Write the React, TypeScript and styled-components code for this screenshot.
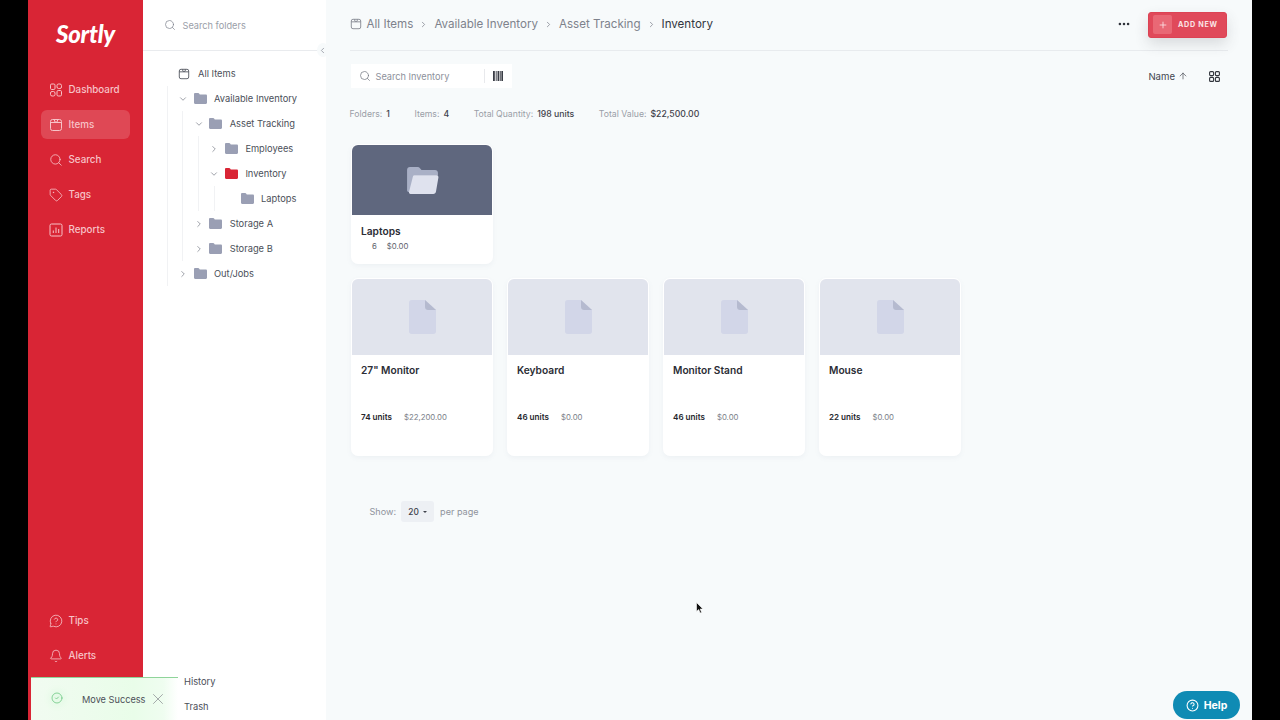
import { ReactNode } from "react";
import styled, { createGlobalStyle } from "styled-components";
import {
    ArrowUp,
    Bell,
    ChevronDown,
    ChevronLeft,
    ChevronRight,
    CircleCheck,
    CircleHelp,
    MessageCircleQuestion,
    MoreHorizontal,
    Plus,
    Search,
    Tag,
    X
} from "lucide-react";

const GlobalStyle = createGlobalStyle`
    html, body {
        margin: 0;
        padding: 0;
        background: #000;
        font-family: "Inter", "Noto Sans", sans-serif;
    }
    * {
        box-sizing: border-box;
    }
`;

const Frame = styled.div`
    position: relative;
    width: 1280px;
    height: 720px;
    padding: 0 28px;
    display: flex;
    overflow: hidden;
    background: #000;
`;

/* left red nav */
const Sidebar = styled.nav`
    width: 114.5px;
    flex-shrink: 0;
    background: #d92535;
    display: flex;
    flex-direction: column;
    padding: 0 12.5px 0 13px;
`;

const Logo = styled.div`
    height: 75px;
    padding-top: 17px;
    text-align: center;
    color: #fff;
    font-family: "Lato", sans-serif;
    font-style: italic;
    font-weight: 900;
    font-size: 24px;
    line-height: 34px;
    letter-spacing: -0.2px;
`;

const NavList = styled.div`
    display: flex;
    flex-direction: column;
    gap: 6px;
`;

const NavBottom = styled(NavList)`
    margin-top: auto;
    padding-bottom: 50px;
`;

const NavItem = styled.div<{ $active?: boolean }>`
    height: 29px;
    display: flex;
    align-items: center;
    gap: 6px;
    padding-left: 7.5px;
    border-radius: 6px;
    font-size: 9.8px;
    font-weight: 500;
    color: #f7c3c8;
    background: ${(p) => (p.$active ? "rgba(255,255,255,0.16)" : "transparent")};

    svg {
        width: 14px;
        height: 14px;
        flex-shrink: 0;
    }
`;

/* folder tree panel */
const FolderPanel = styled.aside`
    position: relative;
    width: 183px;
    flex-shrink: 0;
    background: #fff;
    display: flex;
    flex-direction: column;
`;

const FolderSearch = styled.div`
    height: 51px;
    flex-shrink: 0;
    display: flex;
    align-items: center;
    gap: 7px;
    padding-left: 21px;
    border-bottom: 1px solid #e9ebee;
    margin-right: 8px;
    font-size: 9.2px;
    color: #9a9ea8;

    svg {
        width: 12px;
        height: 12px;
        color: #7d818c;
    }
`;

const CollapseTab = styled.div`
    position: absolute;
    right: -3px;
    top: 43px;
    width: 12px;
    height: 14px;
    display: flex;
    align-items: center;
    justify-content: center;
    background: #f7fafb;
    border-radius: 50%;
    color: #8b8f99;

    svg {
        width: 9px;
        height: 9px;
    }
`;

const Tree = styled.div`
    padding: 10px 0 0 25px;
    flex: 1;
`;

const TreeGroup = styled.div`
    margin-left: 14.7px;
    border-left: 1px solid #f1f2f4;
`;

const TreeRoot = styled(TreeGroup)`
    margin-left: -1px;
`;

const Row = styled.div`
    height: 25px;
    display: flex;
    align-items: center;
    font-size: 9.3px;
    color: #4b4f59;
    white-space: nowrap;
`;

const AllItemsRow = styled(Row)`
    padding-left: 10px;
    gap: 8.5px;

    svg {
        width: 12px;
        height: 12px;
    }
`;

const Caret = styled.span`
    width: 16px;
    flex-shrink: 0;
    margin-left: 7.5px;
    display: flex;
    justify-content: center;
    color: #8b8f99;

    svg {
        width: 10px;
        height: 10px;
    }
`;

const FolderMark = styled.svg`
    width: 13px;
    height: 11px;
    flex-shrink: 0;
    margin: 0 7.5px 0 2.5px;
`;

const PanelFoot = styled.div`
    padding: 0 0 1px 41.5px;
`;

/* main area */
const Main = styled.main`
    flex: 1;
    min-width: 0;
    background: #f7fafb;
    padding: 0 24px;
    display: flex;
    flex-direction: column;
`;

const TopBar = styled.header`
    height: 51px;
    flex-shrink: 0;
    display: flex;
    align-items: center;
    justify-content: space-between;
    border-bottom: 1px solid #e8ebee;
    padding-bottom: 2px;
`;

const Crumbs = styled.div`
    display: flex;
    align-items: center;
    gap: 6px;
    font-size: 11.6px;
    color: #7e828c;

    > svg:first-child {
        width: 12px;
        height: 12px;
        margin-right: -1px;
    }
`;

const CrumbSep = styled(ChevronRight)`
    width: 9px;
    height: 9px;
    color: #7e828c;
`;

const CrumbNow = styled.span`
    color: #33363f;
`;

const TopActions = styled.div`
    display: flex;
    align-items: center;
    gap: 17px;
    margin-right: 1px;
    color: #30333b;
`;

const AddNew = styled.button`
    width: 79px;
    height: 26px;
    margin-top: 1px;
    border: 1px solid #dc4354;
    border-radius: 3px;
    background: #e0495a;
    box-shadow: 0 6px 14px rgba(60, 60, 70, 0.16);
    color: #fbe4e6;
    font: 700 7.2px "Inter", sans-serif;
    letter-spacing: 0.7px;
    display: flex;
    align-items: center;
    gap: 6px;
    padding: 0 0 0 4px;
`;

const PlusBox = styled.span`
    width: 19px;
    height: 19px;
    border-radius: 2px;
    background: #e96875;
    display: flex;
    align-items: center;
    justify-content: center;

    svg {
        width: 10px;
        height: 10px;
    }
`;

const ToolRow = styled.div`
    margin-top: 13px;
    display: flex;
    align-items: center;
    justify-content: space-between;
    padding-left: 1px;
    padding-right: 8px;
`;

const SearchBox = styled.div`
    width: 161px;
    height: 24px;
    background: #fff;
    display: flex;
    align-items: center;
    padding: 0 9px 0 8px;
    font-size: 9.2px;
    color: #8d919b;

    > svg:first-child {
        width: 12px;
        height: 12px;
        color: #6f737d;
        margin-right: 5px;
    }
`;

const SearchLabel = styled.span`
    flex: 1;
`;

const ScanDivider = styled.span`
    width: 1px;
    height: 14px;
    background: #e8e9ec;
    margin-right: 8px;
`;

const SortGroup = styled.div`
    display: flex;
    align-items: center;
    font-size: 9.6px;
    color: #43464f;
`;

const SortArrow = styled(ArrowUp)`
    width: 10px;
    height: 10px;
    margin-left: 3px;
`;

const GridToggle = styled.svg`
    width: 11px;
    height: 11px;
    margin-left: 21px;
`;

const Stats = styled.div`
    margin-top: 19px;
    height: 14px;
    display: flex;
    gap: 24.5px;
    align-items: center;
    font-size: 8.7px;
    color: #9a9ea7;
    white-space: nowrap;
`;

const StatValue = styled.b`
    font-weight: 500;
    color: #3f424b;
    margin-left: 4px;
`;

const CardRow = styled.div`
    display: flex;
    gap: 14px;
    padding-left: 1.5px;
`;

const FolderCards = styled(CardRow)`
    margin-top: 23px;
`;

const ItemCards = styled(CardRow)`
    margin-top: 14px;
`;

const Card = styled.article<{ $tall?: boolean }>`
    width: 142px;
    height: ${(p) => (p.$tall ? "178px" : "120px")};
    background: #fff;
    border-radius: 7px;
    box-shadow: 0 2px 5px rgba(120, 130, 150, 0.07);
    padding: 1px 1px 0 1px;
`;

const Thumb = styled.div<{ $dark?: boolean }>`
    height: ${(p) => (p.$dark ? "70px" : "76px")};
    border-radius: 6px 6px 0 0;
    background: ${(p) => (p.$dark ? "#5f677e" : "#e1e4ed")};
    display: flex;
    align-items: center;
    justify-content: center;
`;

const CardTitle = styled.h3`
    margin: 9px 0 0 9px;
    font-size: 10.2px;
    line-height: 14px;
    font-weight: 600;
    color: #2b2d35;
`;

const ItemTitle = styled(CardTitle)`
    margin-top: 8px;
`;

const FolderMeta = styled.div`
    margin: 3px 0 0 20px;
    display: flex;
    align-items: center;
    gap: 10px;
    font-size: 7.8px;
    color: #5e626c;
`;

const ItemMeta = styled.div`
    margin: 35px 0 0 9px;
    display: flex;
    align-items: center;
    gap: 12px;
    font-size: 7.8px;
    color: #7b7f89;
`;

const Units = styled.b`
    font-weight: 600;
    font-size: 8.1px;
    color: #24262d;
`;

const Pager = styled.div`
    margin: 45px 0 0 20px;
    display: flex;
    align-items: center;
    font-size: 9.1px;
    color: #8f939c;
`;

const PageSelect = styled.div`
    width: 33px;
    height: 21px;
    margin: 0 6px 0 5px;
    background: #edf0f4;
    border-radius: 3px;
    display: flex;
    align-items: center;
    justify-content: center;
    gap: 4px;
    font-size: 8.4px;
    font-weight: 500;
    color: #3f424b;

    &::after {
        content: "";
        border: 2.5px solid transparent;
        border-top-color: #3f424b;
        border-bottom: 0;
    }
`;

/* things floating over the page */
const Toast = styled.div`
    position: absolute;
    left: 31px;
    top: 677px;
    width: 147px;
    height: 43px;
    display: flex;
    align-items: flex-start;
    padding: 15px 0 0 20px;
    font-size: 9.2px;
    color: #4c5058;
    border-top: 1px solid #8fd49a;
    background: linear-gradient(90deg, #f1fbf1 0%, #e9fde9 70%, #effdf0 90%, rgba(255, 255, 255, 0.4) 100%);

    > svg:first-child {
        width: 12px;
        height: 12px;
        margin-top: -1px;
        color: #5cc276;
        filter: drop-shadow(0 0 4px #8eeb9f);
    }
`;

const ToastText = styled.span`
    margin: 1px 0 0 19px;
`;

const ToastClose = styled(X)`
    width: 18px;
    height: 18px;
    margin: -3px 0 0 4px;
    color: #8b8f93;
`;

const HelpButton = styled.button`
    position: absolute;
    left: 1173px;
    top: 691px;
    width: 67px;
    height: 28px;
    border: 0;
    border-radius: 14px;
    background: #0f8bb4;
    color: #fff;
    font: 700 10.5px "Inter", sans-serif;
    display: flex;
    align-items: center;
    justify-content: center;
    gap: 5px;

    svg {
        width: 13px;
        height: 13px;
    }
`;

const Cursor = styled.svg`
    position: absolute;
    left: 696px;
    top: 602px;
    width: 8px;
    height: 12px;
`;

const DashboardIcon = () => (
    <svg viewBox="0 0 14 14" fill="none" stroke="currentColor" strokeWidth="1">
        <rect x="1.5" y="1" width="4.5" height="5.5" rx="1.2" />
        <rect x="8" y="1" width="4.5" height="4.5" rx="1.6" />
        <rect x="1.5" y="8.5" width="4.5" height="4.5" rx="1.6" />
        <rect x="8" y="7.5" width="4.5" height="5.5" rx="1.2" />
    </svg>
);

const BoxIcon = () => (
    <svg viewBox="0 0 14 14" fill="none" stroke="currentColor" strokeWidth="1">
        <rect x="1.5" y="1.5" width="11" height="11" rx="2" />
        <path d="M1.5 4.5h11M5.5 1.5v1.7c0 .4.3.7.7.7h1.6c.4 0 .7-.3.7-.7V1.5" />
    </svg>
);

const ReportsIcon = () => (
    <svg viewBox="0 0 14 14" fill="none" stroke="currentColor" strokeWidth="1">
        <rect x="1" y="1" width="12" height="12" rx="1.5" />
        <path d="M4.3 10V7.5M7 10V4.5M9.7 10V6" />
    </svg>
);

const Folder = ({ active }: { active?: boolean }) => (
    <FolderMark viewBox="0 0 13 11">
        <path
            d="M0 1.2C0 .5.5 0 1.2 0h3c.4 0 .7.2.9.5l.7 1h6c.7 0 1.2.5 1.2 1.2v7.1c0 .7-.5 1.2-1.2 1.2H1.2C.5 11 0 10.5 0 9.8z"
            fill={active ? "#d92535" : "#9a9fb4"}
        />
    </FolderMark>
);

const Barcode = () => (
    <svg width="10" height="10" viewBox="0 0 11 11" fill="#3a3d46">
        <path d="M0 0h2v11H0zM3 0h1v11H3zM5 0h2v11H5zM7.7 0h.8v11h-.8zM9.2 0H11v11H9.2z" />
    </svg>
);

const OpenFolderArt = () => (
    <svg width="33" height="27" viewBox="0 0 34 28">
        <path d="M1 3c0-1.600 1.200-3 3-3h8c1 0 1.800.5 2.400 1.300L16 3h14c1.700 0 3 1.300 3 3v3H8L4 26H3c-1.200 0-2-1-2-2z" fill="#a9b0c6" />
        <path d="M7 10c.2-1 1-1.500 2-1.500h22.500c1.300 0 2.300 1.200 2 2.500L31 25.500c-.2 1.400-1.300 2.500-2.800 2.500H4.500c-1 0-1.800-1-1.500-2z" fill="#dfe2ee" />
    </svg>
);

const FileArt = () => (
    <svg width="27" height="34" viewBox="0 0 27 34">
        <path d="M2.5 0H16l11 10v21.500c0 1.400-1.100 2.500-2.500 2.500h-22C1.100 34 0 32.900 0 31.500v-29C0 1.100 1.100 0 2.500 0z" fill="#d2d6e8" />
        <path d="M16 0l11 10h-8c-1.700 0-3-1.300-3-3z" fill="#b5bacf" />
    </svg>
);

const TreeRow = ({
    label,
    open,
    leaf,
    active
}: {
    label: string;
    open?: boolean;
    leaf?: boolean;
    active?: boolean;
}): ReactNode => (
    <Row>
        <Caret>{leaf ? null : open ? <ChevronDown /> : <ChevronRight />}</Caret>
        <Folder active={active} />
        <span>{label}</span>
    </Row>
);

const items = [
    { name: "27\" Monitor", units: "74 units", value: "$22,200.00" },
    { name: "Keyboard", units: "46 units", value: "$0.00" },
    { name: "Monitor Stand", units: "46 units", value: "$0.00" },
    { name: "Mouse", units: "22 units", value: "$0.00" }
];

export default function App() {
    return (
        <>
            <GlobalStyle />
            <Frame>
                <Sidebar>
                    <Logo>Sortly</Logo>
                    <NavList>
                        <NavItem><DashboardIcon />Dashboard</NavItem>
                        <NavItem $active><BoxIcon />Items</NavItem>
                        <NavItem><Search strokeWidth={1.4} />Search</NavItem>
                        <NavItem><Tag strokeWidth={1.4} />Tags</NavItem>
                        <NavItem><ReportsIcon />Reports</NavItem>
                    </NavList>
                    <NavBottom>
                        <NavItem><MessageCircleQuestion strokeWidth={1.4} />Tips</NavItem>
                        <NavItem><Bell strokeWidth={1.4} />Alerts</NavItem>
                    </NavBottom>
                </Sidebar>

                <FolderPanel>
                    <FolderSearch>
                        <Search strokeWidth={1.4} />
                        Search folders
                    </FolderSearch>
                    <CollapseTab><ChevronLeft /></CollapseTab>
                    <Tree>
                        <AllItemsRow><BoxIcon />All Items</AllItemsRow>
                        <TreeRoot>
                            <TreeRow label="Available Inventory" open />
                            <TreeGroup>
                                <TreeRow label="Asset Tracking" open />
                                <TreeGroup>
                                    <TreeRow label="Employees" />
                                    <TreeRow label="Inventory" open active />
                                    <TreeGroup>
                                        <TreeRow label="Laptops" leaf />
                                    </TreeGroup>
                                </TreeGroup>
                                <TreeRow label="Storage A" />
                                <TreeRow label="Storage B" />
                            </TreeGroup>
                            <TreeRow label="Out/Jobs" />
                        </TreeRoot>
                    </Tree>
                    <PanelFoot>
                        <Row>History</Row>
                        <Row>Trash</Row>
                    </PanelFoot>
                </FolderPanel>

                <Main>
                    <TopBar>
                        <Crumbs>
                            <BoxIcon />
                            <span>All Items</span>
                            <CrumbSep />
                            <span>Available Inventory</span>
                            <CrumbSep />
                            <span>Asset Tracking</span>
                            <CrumbSep />
                            <CrumbNow>Inventory</CrumbNow>
                        </Crumbs>
                        <TopActions>
                            <MoreHorizontal size={14} strokeWidth={2.4} />
                            <AddNew>
                                <PlusBox><Plus /></PlusBox>
                                ADD NEW
                            </AddNew>
                        </TopActions>
                    </TopBar>

                    <ToolRow>
                        <SearchBox>
                            <Search strokeWidth={1.4} />
                            <SearchLabel>Search Inventory</SearchLabel>
                            <ScanDivider />
                            <Barcode />
                        </SearchBox>
                        <SortGroup>
                            Name
                            <SortArrow strokeWidth={1.6} />
                            <GridToggle viewBox="0 0 11 11" fill="none" stroke="#30333b" strokeWidth="1.1">
                                <rect x="0.6" y="0.6" width="4" height="4" rx="1" />
                                <rect x="6.4" y="0.6" width="4" height="4" rx="1" />
                                <rect x="0.6" y="6.4" width="4" height="4" rx="1" />
                                <rect x="6.4" y="6.4" width="4" height="4" rx="1" />
                            </GridToggle>
                        </SortGroup>
                    </ToolRow>

                    <Stats>
                        <span>Folders:<StatValue>1</StatValue></span>
                        <span>Items:<StatValue>4</StatValue></span>
                        <span>Total Quantity:<StatValue>198 units</StatValue></span>
                        <span>Total Value:<StatValue>$22,500.00</StatValue></span>
                    </Stats>

                    <FolderCards>
                        <Card>
                            <Thumb $dark><OpenFolderArt /></Thumb>
                            <CardTitle>Laptops</CardTitle>
                            <FolderMeta>
                                <span>6</span>
                                <span>$0.00</span>
                            </FolderMeta>
                        </Card>
                    </FolderCards>

                    <ItemCards>
                        {items.map((item) => (
                            <Card $tall key={item.name}>
                                <Thumb><FileArt /></Thumb>
                                <ItemTitle>{item.name}</ItemTitle>
                                <ItemMeta>
                                    <Units>{item.units}</Units>
                                    <span>{item.value}</span>
                                </ItemMeta>
                            </Card>
                        ))}
                    </ItemCards>

                    <Pager>
                        Show:
                        <PageSelect>20</PageSelect>
                        per page
                    </Pager>
                </Main>

                <Toast>
                    <CircleCheck strokeWidth={1.4} />
                    <ToastText>Move Success</ToastText>
                    <ToastClose strokeWidth={1} />
                </Toast>

                <HelpButton>
                    <CircleHelp strokeWidth={2} />
                    Help
                </HelpButton>

                <Cursor viewBox="0 0 8 12">
                    <path d="M0.5 0.5v9l2.200-2 1.400 3.500 1.500-.6-1.400-3.400H7z" fill="#111" stroke="#fff" strokeWidth="0.6" />
                </Cursor>
            </Frame>
        </>
    );
}
